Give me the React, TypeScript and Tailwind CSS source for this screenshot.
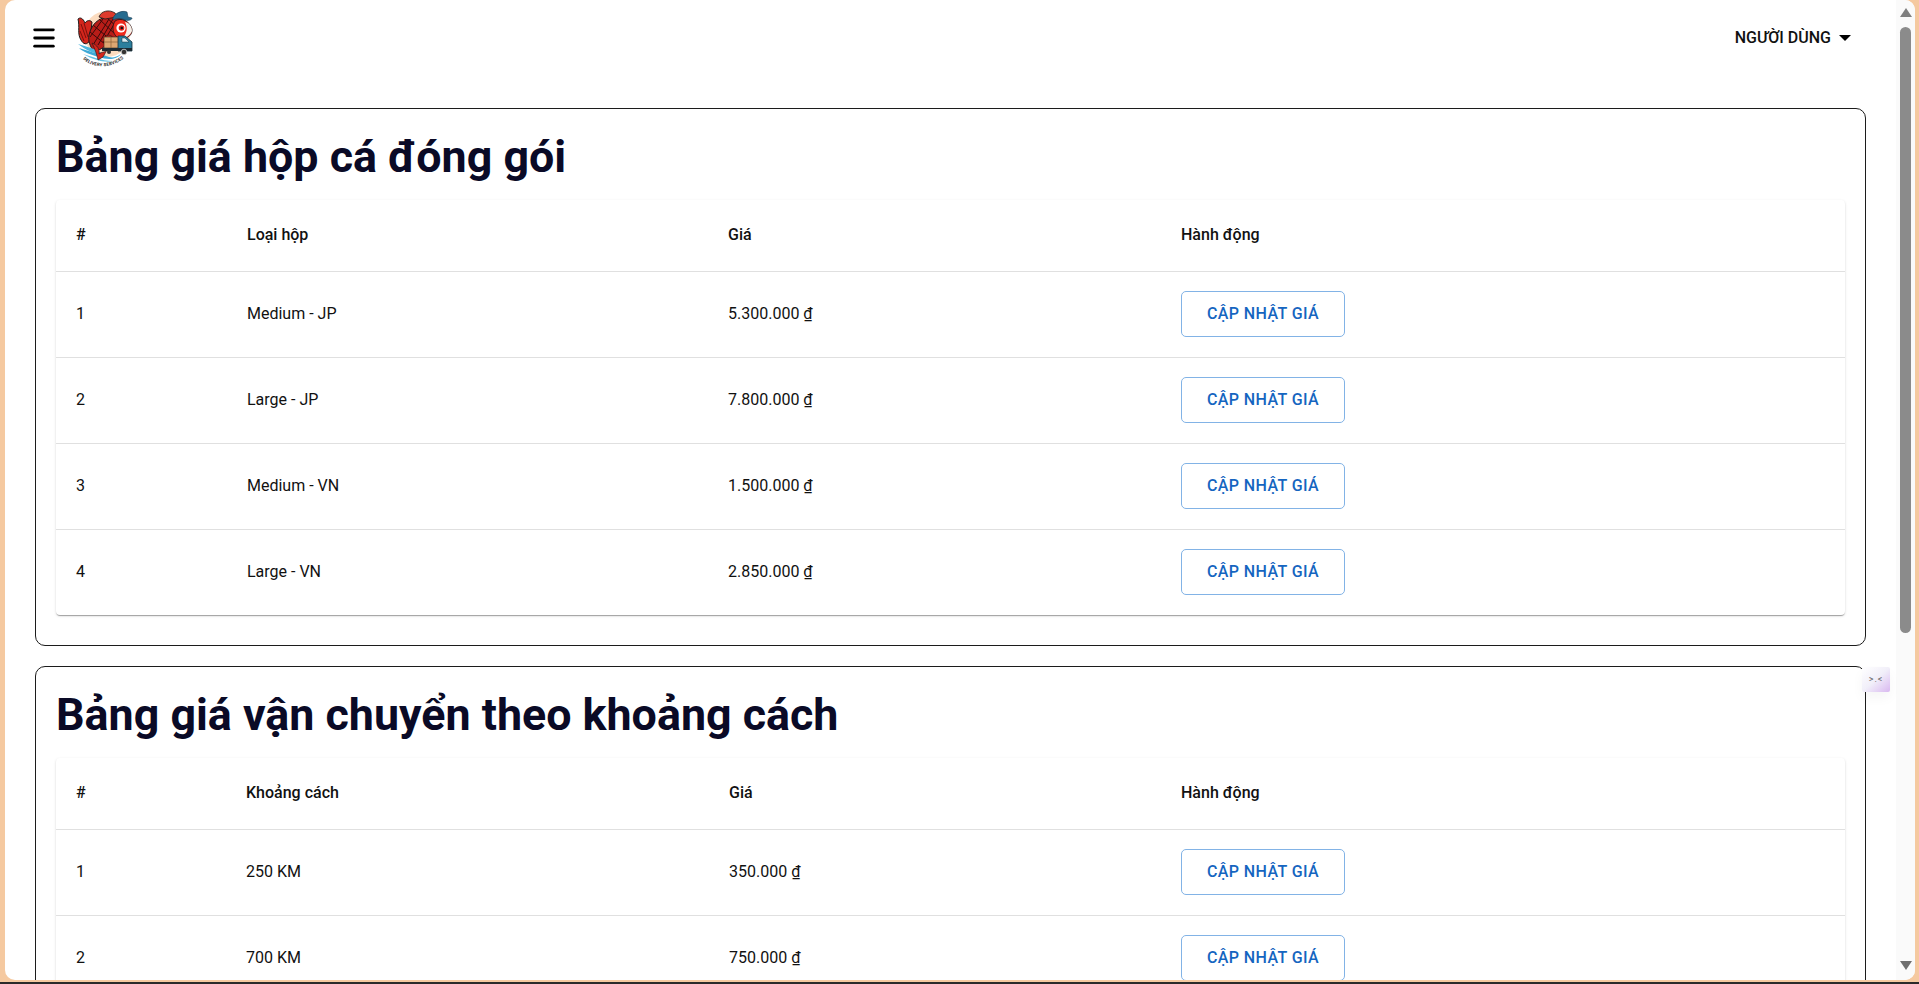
import { Menu } from "lucide-react";

const boxRows = [
    { id: 1, name: "Medium - JP", price: "5.300.000 ₫" },
    { id: 2, name: "Large - JP", price: "7.800.000 ₫" },
    { id: 3, name: "Medium - VN", price: "1.500.000 ₫" },
    { id: 4, name: "Large - VN", price: "2.850.000 ₫" },
];

const shipRows = [
    { id: 1, name: "250 KM", price: "350.000 ₫" },
    { id: 2, name: "700 KM", price: "750.000 ₫" },
];

function Logo() {
    return (
        <svg width="62" height="62" viewBox="0 0 62 62" className="shrink-0">
            <circle cx="32" cy="27" r="23" fill="#fbdcc0" />
            {/* tail */}
            <path d="M3 12 C5 10 8 11 10 16 C12 13 15 13 17 15 L15 33 C12 39 8 37 6 33 C2 27 5 20 3 12Z" fill="#d3261c" stroke="#1b1b1b" strokeWidth="1" />
            <path d="M6 17 L11 31 M9 16 L13 30 M5 24 L9 34" stroke="#7c0f0c" strokeWidth="1" />
            {/* body */}
            <path d="M14 28 C17 14 28 8 42 9 C50 10 54 17 53 24 C50 31 40 32 34 35 C30 40 24 44 19 44 C15 40 13 34 14 28Z" fill="#b81d18" stroke="#1b1b1b" strokeWidth="1" />
            <path d="M18 38 L34 12 M23 38 L38 12 M28 36 L41 14 M15 30 L28 12 M18 18 L37 34 M15 25 L30 37 M24 12 L41 28 M31 10 L42 20" stroke="#3a0a0a" strokeWidth="1" />
            {/* dorsal fin */}
            <path d="M24 10 C26 4 34 2 40 6 L42 10 L30 12Z" fill="#dd3a2c" stroke="#1b1b1b" strokeWidth="0.8" />
            {/* head */}
            <path d="M40 14 C46 10 55 14 57 22 C58 28 52 32 46 32 C41 31 38 26 38 21 C38 18 39 16 40 14Z" fill="#ee2a1c" stroke="#1b1b1b" strokeWidth="0.8" />
            <path d="M50 15 C55 16 57 20 57 24 C55 29 50 31 47 31 C52 27 53 21 50 15Z" fill="#f4f1ea" />
            <circle cx="46" cy="21" r="4.6" fill="#fff" />
            <circle cx="46.5" cy="21" r="2.8" fill="#e3221a" />
            <circle cx="46.8" cy="21" r="1.3" fill="#111" />
            {/* cap */}
            <path d="M38 11 C40 6 47 3 52 5 L53 10 L57 11 C57 13 53 14 50 13 C46 11 42 11 38 13Z" fill="#256b8f" stroke="#173a50" strokeWidth="0.6" />
            {/* side fin */}
            <path d="M30 30 C33 27 37 28 39 32 L35 35 L31 34Z" fill="#c9261c" stroke="#1b1b1b" strokeWidth="0.6" />
            {/* truck boxes */}
            <rect x="29" y="30" width="15" height="11" fill="#dca772" stroke="#3a2a1a" strokeWidth="0.6" />
            <path d="M36 30 V41 M29 35 H44" stroke="#8b6237" strokeWidth="0.7" />
            {/* truck cab */}
            <path d="M43 29 H50 L57 35 V44 H43Z" fill="#2c7f9d" stroke="#12313f" strokeWidth="0.8" />
            <path d="M47 31 H50 L54 35 H47Z" fill="#dbeef4" stroke="#12313f" strokeWidth="0.5" />
            <rect x="27" y="41" width="30" height="3" fill="#1d2b33" />
            <circle cx="49" cy="45" r="2.8" fill="#333" stroke="#ddd" strokeWidth="0.8" />
            <circle cx="34" cy="45" r="2" fill="#333" />
            {/* waves */}
            <path d="M3 37 C12 40 20 41 28 47 C22 48 12 44 3 37Z" fill="#4db7dd" />
            <path d="M4 41 C12 44 22 46 34 50 C38 51 42 50 46 47 C42 53 32 53 24 50 C16 48 8 45 4 41Z" fill="#3ea9d6" />
            <path d="M8 47 C16 49 26 54 38 54 C32 56 20 54 8 47Z" fill="#65c1e4" />
            <path d="M17 36 C22 38 25 42 24 47 C27 44 30 46 32 43 L28 50 L23 53 C22 48 20 42 17 36Z" fill="#d3261c" stroke="#1b1b1b" strokeWidth="0.6" />
            <path id="logo-arc" d="M8 52 C18 62 38 62 50 50" fill="none" />
            <text fontFamily="Roboto, sans-serif" fontSize="4.4" fontWeight="700" fill="#1a1a1a" letterSpacing="0.2">
                <textPath href="#logo-arc">DELIVERY SERVICES</textPath>
            </text>
        </svg>
    );
}

function PriceTable({ title, column, rows, widths }: { title: string; column: string; rows: typeof boxRows; widths: string[] }) {
    return (
        <section className="border border-[#1c1c1c] rounded-[10px] px-5 pt-[5px] pb-[30px] bg-white">
            <h2 className="text-[44.8px] leading-[86px] font-bold text-[#0a0a26]">{title}</h2>
            <div className="rounded shadow-[0_2px_1px_-1px_rgba(0,0,0,0.2),0_1px_1px_0_rgba(0,0,0,0.14),0_1px_3px_0_rgba(0,0,0,0.12)] bg-white">
                <table className="w-full table-fixed border-collapse text-[16px] text-[#111111]">
                    <colgroup>
                        {widths.map((w, i) => <col key={i} className={w} />)}
                    </colgroup>
                    <thead>
                        <tr className="h-[71px] border-b border-[#e0e0e0] text-left">
                            <th className="pl-5 font-medium">#</th>
                            <th className="pl-5 font-medium">{column}</th>
                            <th className="pl-5 font-medium">Giá</th>
                            <th className="pl-5 font-medium">Hành động</th>
                        </tr>
                    </thead>
                    <tbody>
                        {rows.map((row, index) => (
                            <tr key={row.id} className={index === rows.length - 1 && rows.length === 4 ? "h-[86px]" : "h-[86px] border-b border-[#e0e0e0]"}>
                                <td className="pl-5">{row.id}</td>
                                <td className="pl-5">{row.name}</td>
                                <td className="pl-5">{row.price}</td>
                                <td className="pl-5">
                                    <button className="h-[46px] w-[164px] rounded-[5px] border border-[#82b3e6] text-[16px] font-medium tracking-[0.4px] text-[#1565c0]">
                                        CẬP NHẬT GIÁ
                                    </button>
                                </td>
                            </tr>
                        ))}
                    </tbody>
                </table>
            </div>
        </section>
    );
}

export default function App() {
    return (
        <div className="relative w-[1919px] h-[984px] overflow-hidden bg-[#f5c9a0] font-['Roboto',sans-serif] pl-[5px] pr-1">
            <div className="flex h-[980px] overflow-hidden rounded-[10px] bg-white">
                <div className="flex-1 min-w-0 overflow-hidden">
                    <header className="flex h-[76px] items-center pl-[25px] pr-[45px]">
                        <Menu size={28} strokeWidth={2.4} className="text-black" />
                        <div className="ml-[17px]"><Logo /></div>
                        <div className="ml-auto flex items-center gap-2 text-[16px] font-medium text-[#111111]">
                            NGƯỜI DÙNG
                            <span className="h-0 w-0 border-x-[6px] border-t-[6px] border-x-transparent border-t-black" />
                        </div>
                    </header>
                    <main className="flex flex-col gap-5 pl-[30px] pr-[30px] pt-8">
                        <PriceTable title="Bảng giá hộp cá đóng gói" column="Loại hộp" rows={boxRows} widths={["w-[171px]", "w-[481px]", "w-[453px]", ""]} />
                        <PriceTable title="Bảng giá vận chuyển theo khoảng cách" column="Khoảng cách" rows={shipRows} widths={["w-[170px]", "w-[483px]", "w-[452px]", ""]} />
                    </main>
                </div>
                <aside className="flex w-[19px] shrink-0 flex-col items-center bg-[#fafafa] pt-2">
                    <span className="h-0 w-0 border-x-[6px] border-b-[9px] border-x-transparent border-b-[#7f7f7f]" />
                    <div className="mt-[10px] h-[606px] w-[11px] rounded-full bg-[#8b8b8b]" />
                    <span className="mt-[328px] h-0 w-0 border-x-[6px] border-t-[9px] border-x-transparent border-t-[#6f6f6f]" />
                </aside>
            </div>
            <div className="absolute bottom-0 left-0 h-[2px] w-full bg-[#2a2a2a]" />
            {/* floating widget */}
            <div className="absolute left-[1862px] top-[667px] flex h-[25px] w-[28px] items-center justify-center rounded-[2px] bg-gradient-to-br from-white via-[#f1eff9] to-[#d9b8f0] text-[9px] tracking-[1px] text-[#666666] shadow-[0_6px_12px_rgba(0,0,0,0.04)]">
                &gt;.&lt;
            </div>
        </div>
    );
}
